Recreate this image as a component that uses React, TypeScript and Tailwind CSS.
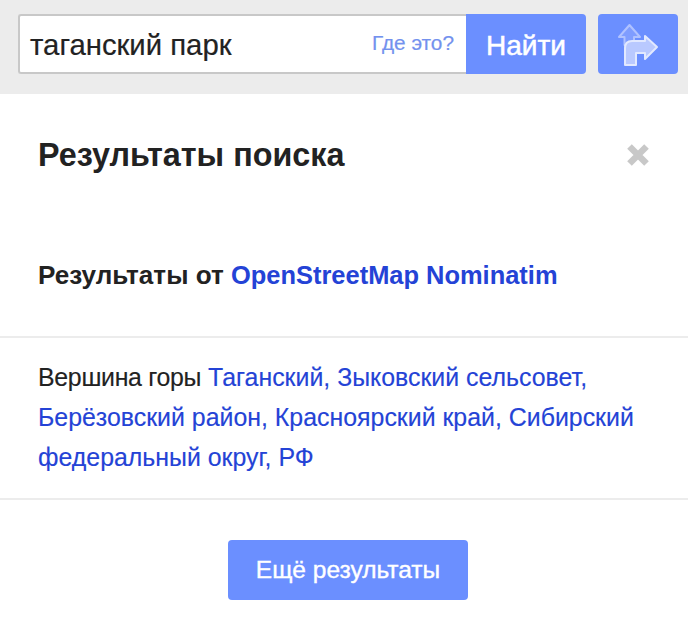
export default function App() {
  return (
    <div className="w-[688px] h-[618px] overflow-hidden bg-white font-['Liberation_Sans',Arial,sans-serif] text-[#222]">
      <div className="h-[94px] bg-[#ececec] pt-[14px] pl-[18px] pr-[10px] flex">
        <div className="flex h-[60px] w-[568px]">
          <div className="flex-1 h-[60px] bg-white border-2 border-r-0 border-[#c8c8c8] rounded-l-[3px] flex items-center justify-between pl-[10px] pr-[12px]">
            <span className="text-[29.3px] leading-none text-[#222] pt-[2px] [-webkit-text-stroke:0.2px]">таганский парк</span>
            <span className="text-[20.8px] leading-none text-[#7391ee] [-webkit-text-stroke:0.2px] -mt-[2px]">Где это?</span>
          </div>
          <button className="w-[120px] h-[60px] bg-[#6b8fff] text-white text-[28px] rounded-r-[4px] flex items-center justify-center [-webkit-text-stroke:0.5px] pt-[3px]">Найти</button>
        </div>
        <button className="ml-[12px] w-[80px] h-[60px] bg-[#6b8fff] rounded-[4px] flex items-center justify-center">
          <svg width="44" height="46" viewBox="0 0 44 46">
            <path d="M13.5 4 L3 16 H8.5 V24 H18 V16 H24 Z" fill="#7f9dff" stroke="#b0c2ff" strokeWidth="2" strokeLinejoin="round" />
            <path d="M9 44 V27 Q9 20 16 20 H29 V15 L41 26 L29 38 V32 H20 V44 Z" fill="#b9c9ff" stroke="#e2e9ff" strokeWidth="2" strokeLinejoin="round" />
          </svg>
        </button>
      </div>
      <div className="flex items-start justify-between pl-[38px] pr-[38px] pt-[43px]">
        <h1 className="text-[32.3px] leading-[36px] font-bold text-[#222]">Результаты поиска</h1>
        <svg className="mt-[6px]" width="24" height="24" viewBox="0 0 24 24">
          <path d="M3.5 3.5 L20.5 20.5 M20.5 3.5 L3.5 20.5" stroke="#c8c8c8" strokeWidth="6.5" />
        </svg>
      </div>
      <div className="mt-[82px] px-[38px] text-[26.1px] leading-[40px] font-bold h-[81px]">
        Результаты от <a className="text-[#2443d6] text-[25.45px]">OpenStreetMap Nominatim</a>
      </div>
      <div className="border-t-2 border-[#ececec] px-[38px] pt-[19px] h-[162px] text-[24.9px] leading-[40px] [-webkit-text-stroke:0.15px]">
        <span className="tracking-[-0.3px]">Вершина горы</span> <a className="text-[#2443d6]">Таганский, Зыковский сельсовет, Берёзовский район, Красноярский край, Сибирский федеральный округ, РФ</a>
      </div>
      <div className="border-t-2 border-[#ececec] pt-[40px] pl-[228px]">
        <button className="w-[240px] h-[60px] bg-[#6b8fff] text-white text-[24.5px] rounded-[4px] [-webkit-text-stroke:0.4px]">Ещё результаты</button>
      </div>
    </div>
  );
}
